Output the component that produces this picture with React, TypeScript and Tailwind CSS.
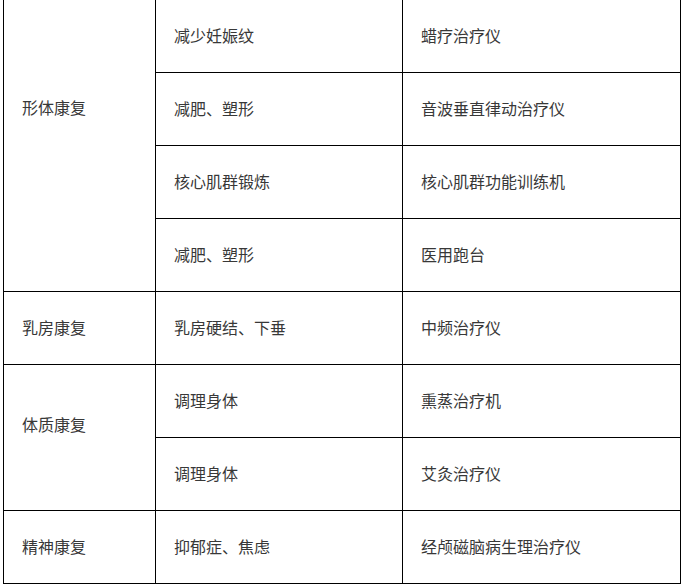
import React from 'react';

const rows: { group?: string; span?: number; shift?: string; need: string; device: string }[] = [
    { group: '形体康复', span: 4, shift: 'pb-[78px]', need: '减少妊娠纹', device: '蜡疗治疗仪' },
    { need: '减肥、塑形', device: '音波垂直律动治疗仪' },
    { need: '核心肌群锻炼', device: '核心肌群功能训练机' },
    { need: '减肥、塑形', device: '医用跑台' },
    { group: '乳房康复', span: 1, shift: 'pb-[2px]', need: '乳房硬结、下垂', device: '中频治疗仪' },
    { group: '体质康复', span: 2, shift: 'pb-[28px]', need: '调理身体', device: '熏蒸治疗机' },
    { need: '调理身体', device: '艾灸治疗仪' },
    { group: '精神康复', span: 1, shift: 'pb-[2px]', need: '抑郁症、焦虑', device: '经颅磁脑病生理治疗仪' },
];

export default function App() {
    return (
        <div className="w-[683px] h-[587px] overflow-hidden bg-white">
            <table
                className="mt-[-1px] ml-[3px] w-[677px] border-collapse table-fixed text-[16px] text-[#383838]"
                style={{ fontFamily: '"Noto Sans CJK SC", "Noto Sans", sans-serif' }}
            >
                <colgroup>
                    <col className="w-[152px]" />
                    <col className="w-[247px]" />
                    <col className="w-[278px]" />
                </colgroup>
                <tbody>
                    {rows.map((r, i) => (
                        <tr key={i} className="h-[73px]">
                            {r.group && (
                                <td rowSpan={r.span} className={`border border-black pl-[18px] align-middle ${r.shift}`}>
                                    {r.group}
                                </td>
                            )}
                            <td className="border border-black pl-[18px] pb-[3px] align-middle">{r.need}</td>
                            <td className="border border-black pl-[18px] pb-[3px] align-middle">{r.device}</td>
                        </tr>
                    ))}
                </tbody>
            </table>
        </div>
    );
}
